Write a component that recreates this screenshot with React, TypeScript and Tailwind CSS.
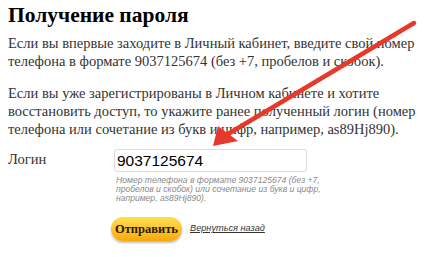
export default function App() {
  return (
    <div className="relative w-[434px] h-[257px] overflow-hidden bg-white text-[#333] font-[Liberation_Serif,serif]">
      <div className="pl-2 pt-[3px]">
        <h1 className="text-[21.5px] leading-[24px] font-bold text-black">
          Получение пароля
        </h1>
        <p className="mt-[7px] text-[14.5px] leading-[18px] whitespace-nowrap">
          Если вы впервые заходите в Личный кабинет, введите свой номер
          <br />
          телефона в формате 9037125674 (без +7, пробелов и скобок).
        </p>
        <p className="mt-[14px] text-[14.5px] leading-[18px] whitespace-nowrap">
          Если вы уже зарегистрированы в Личном кабинете и хотите
          <br />
          восстановить доступ, то укажите ранее полученный логин (номер
          <br />
          телефона или сочетание из букв и цифр, например, as89Hj890).
        </p>
        <div className="mt-[11px] flex items-start">
          <label className="w-[106px] pt-[1px] text-[14.5px] leading-[18px]">Логин</label>
          <div className="w-[193px]">
            <div className="h-[23px] rounded-[3px] border border-[#dcdcdc] bg-white px-[2px] flex items-center text-[15.5px] text-black font-[Liberation_Sans,sans-serif]">
              9037125674
            </div>
            <p className="mt-[4px] pl-[2px] text-[8.6px] leading-[9px] italic text-[#8a8a8a] whitespace-nowrap font-[Liberation_Sans,sans-serif]">
              Номер телефона в формате 9037125674 (без +7,
              <br />
              пробелов и скобок) или сочетание из букв и цифр,
              <br />
              например, as89Hj890).
            </p>
          </div>
        </div>
        <div className="mt-[14px] ml-[103px] flex items-center gap-[8px]">
          <button className="h-[24px] w-[71px] rounded-full bg-gradient-to-b from-[#ffe04d] to-[#f7a900] shadow-[0_2px_2px_rgba(0,0,0,0.25)] text-[12.5px] font-bold text-[#2a1a00]">
            Отправить
          </button>
          <a className="text-[9.2px] italic underline text-[#333] font-[Liberation_Sans,sans-serif]">
            Вернуться назад
          </a>
        </div>
      </div>
      <svg className="absolute left-0 top-0 pointer-events-none" width="434" height="257">
        <line x1="414" y1="23" x2="228" y2="134" stroke="#e8372b" strokeWidth="4.5" strokeLinecap="round" />
        <polygon points="213,146 218,126 238,141" fill="#e8372b" />
      </svg>
    </div>
  );
}
